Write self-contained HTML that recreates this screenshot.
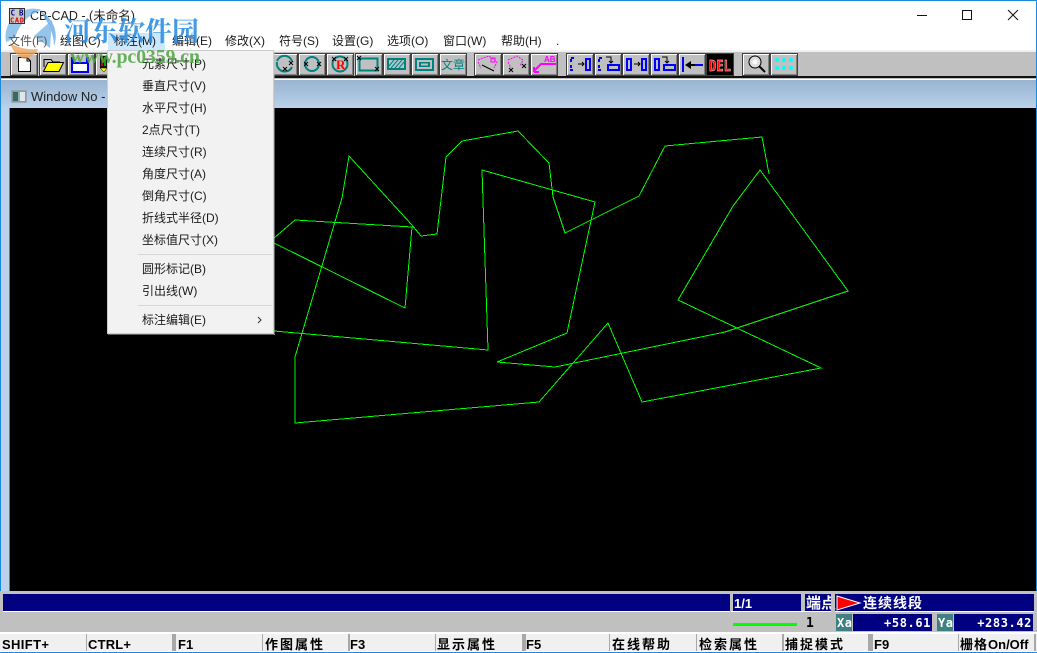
<!DOCTYPE html>
<html lang="zh"><head><meta charset="utf-8"><title>CB-CAD</title>
<style>
html,body{margin:0;padding:0;background:#fff;width:1037px;height:653px;overflow:hidden}
svg{display:block;position:absolute;left:0;top:0}
.m{font:12px "Liberation Sans","Noto Sans CJK SC",sans-serif;fill:#1a1a1a}
.s{font:bold 13px "Liberation Sans","WenQuanYi Zen Hei",sans-serif;fill:#000}
.c{font:bold 13px "WenQuanYi Zen Hei","Noto Sans CJK SC",sans-serif;fill:#000;letter-spacing:2px}
.w{font:bold 12px "DejaVu Sans Mono",monospace;fill:#fff}
</style></head><body>
<svg width="1037" height="653" viewBox="0 0 1037 653" xmlns="http://www.w3.org/2000/svg">
<defs>
<linearGradient id="g" x1="0" y1="0" x2="0" y2="1"><stop offset="0" stop-color="#99b4d1"/><stop offset="1" stop-color="#b9d1ea"/></linearGradient>
<g id="b"><rect x="0" y="0" width="28" height="23" fill="#404040"/><rect x="1" y="1" width="26" height="21" fill="#fff"/><rect x="2" y="2" width="25" height="20" fill="#808080"/><rect x="2" y="2" width="24" height="19" fill="#c0c0c0"/></g>
<g id="x"><path d="M-2 -2L2 2M2 -2L-2 2" stroke="#000" stroke-width="1" fill="none"/></g>
</defs>

<rect width="1037" height="653" fill="#fff"/>
<rect x="0" y="50" width="1037" height="2" fill="#f0f0f0"/>
<rect x="0" y="52" width="1037" height="24" fill="#c0c0c0"/>
<rect x="0" y="76" width="1037" height="2" fill="#111"/>
<rect x="0" y="78" width="1037" height="1" fill="#c0c0c0"/>
<rect x="0" y="79" width="1037" height="1" fill="#fff"/>
<rect x="0" y="80" width="1037" height="28" fill="url(#g)"/>
<rect x="0" y="108" width="10" height="483" fill="#b9d1ea"/>
<rect x="9" y="108" width="1" height="483" fill="#807f30"/>
<rect x="10" y="108" width="1027" height="483" fill="#000"/>

<!-- window border -->
<rect x="0" y="0" width="1037" height="1" fill="#1a8ae0"/>
<rect x="0" y="0" width="1" height="653" fill="#1a8ae0"/>
<rect x="1036" y="0" width="1" height="653" fill="#1a8ae0"/>

<text x="30" y="20" style="font:12.500px 'Liberation Sans','Noto Sans CJK SC',sans-serif;fill:#222">CB-CAD - (未命名)</text>

<!-- window controls -->
<rect x="917" y="15" width="10" height="1" fill="#111"/>
<rect x="962.500" y="10.500" width="9" height="9" fill="none" stroke="#111" stroke-width="1"/>
<path d="M1008 10L1018 20M1018 10L1008 20" stroke="#111" stroke-width="1" fill="none"/>

<!-- menu bar -->
<rect x="108" y="33" width="57" height="17" fill="#cce8ff"/>
<text class="m" x="60" y="45">绘图(C)</text><text class="m" x="114" y="45">标注(M)</text><text class="m" x="172" y="45">编辑(E)</text><text class="m" x="225" y="45">修改(X)</text><text class="m" x="279" y="45">符号(S)</text><text class="m" x="332" y="45">设置(G)</text><text class="m" x="387" y="45">选项(O)</text><text class="m" x="443" y="45">窗口(W)</text><text class="m" x="501" y="45">帮助(H)</text><text class="m" x="556" y="45">.</text>

<!-- toolbar buttons -->
<use href="#b" x="10" y="53"/><use href="#b" x="39" y="53"/><use href="#b" x="67" y="53"/><use href="#b" x="95" y="53"/>
<use href="#b" x="270" y="53"/><use href="#b" x="298" y="53"/><use href="#b" x="326" y="53"/><use href="#b" x="355" y="53"/><use href="#b" x="383" y="53"/><use href="#b" x="411" y="53"/><use href="#b" x="439" y="53"/>
<use href="#b" x="474" y="53"/><use href="#b" x="502" y="53"/><use href="#b" x="530" y="53"/>
<use href="#b" x="566" y="53"/><use href="#b" x="594" y="53"/><use href="#b" x="622" y="53"/><use href="#b" x="650" y="53"/><use href="#b" x="678" y="53"/><use href="#b" x="706" y="53"/>
<use href="#b" x="742" y="53"/><use href="#b" x="770" y="53"/>

<!-- new -->
<path d="M18.500 57.500H27L30.500 61V71.500H18.500Z" fill="#fff" stroke="#000"/><path d="M27 57.500V61H30.500" fill="none" stroke="#000"/>
<!-- open -->
<path d="M43.500 71.500L48 62.500H63.500L59 71.500Z" fill="#ff0" stroke="#000"/><path d="M44 67V59.500H51L53 62H60" fill="none" stroke="#000"/>
<!-- save -->
<rect x="71" y="57" width="18" height="16" fill="#00f"/><rect x="74" y="57" width="12" height="5" fill="#c0c0c0"/><rect x="73" y="64" width="14" height="7" fill="#fff"/>
<!-- pencil -->
<rect x="100" y="56" width="7" height="12" fill="#111"/><rect x="101" y="57" width="2" height="9" fill="#c00"/><rect x="104" y="57" width="2" height="9" fill="#0a0"/><path d="M100 68H107L104 72Z" fill="#ff0" stroke="#000" stroke-width=".5"/>

<!-- teal arcs -->
<path d="M277 61A8 8 0 0 1 292 61M292 67A8 8 0 0 1 279 69A8 8 0 0 1 277 62" fill="none" stroke="#008080" stroke-width="2"/>
<use href="#x" x="291" y="63"/><use href="#x" x="285" y="69"/>
<circle cx="312" cy="64" r="7" fill="none" stroke="#008080" stroke-width="2"/><use href="#x" x="306" y="64"/><use href="#x" x="319" y="64"/>
<circle cx="340" cy="64" r="7.500" fill="none" stroke="#008080" stroke-width="2"/><use href="#x" x="334" y="59"/><use href="#x" x="346" y="59"/>
<text x="336" y="69" font-family="Liberation Serif,serif" font-weight="bold" font-size="13" fill="#f00">R</text>
<rect x="359.500" y="58.500" width="18" height="12" fill="none" stroke="#008080" stroke-width="2"/><use href="#x" x="359" y="58"/><use href="#x" x="377" y="69"/>
<rect x="387" y="58" width="19" height="12" fill="#008080"/><rect x="389" y="60" width="15" height="8" fill="#b0c8c8"/>
<path d="M389 66L394 60M391 68L398 60M395 68L402 60M399 68L404 62" stroke="#008080" fill="none"/>
<rect x="415" y="58" width="19" height="13" fill="#008080"/><rect x="417" y="60" width="15" height="9" fill="#c0c0c0"/><rect x="419" y="62" width="11" height="5" fill="#008080"/><rect x="421" y="63.500" width="7" height="2" fill="#c0c0c0"/>
<text x="441" y="69" font-family="Noto Sans CJK SC,sans-serif" font-size="12" fill="#008080">文章</text>

<!-- magenta -->
<path d="M478 60L489 56L497 62L494 68M478 62L481 68" fill="none" stroke="#f0f" stroke-dasharray="2 1"/><path d="M482 65L494 71" stroke="#000" fill="none"/><rect x="491" y="58" width="4" height="4" fill="none" stroke="#f0f"/>
<path d="M508 60L517 56L523 60L520 66M508 62L511 68" fill="none" stroke="#f0f" stroke-dasharray="2 1"/><use href="#x" x="511" y="70"/><use href="#x" x="524" y="66"/>
<path d="M534 71L541 64H556" fill="none" stroke="#f0f" stroke-width="2"/><path d="M534 72V67M534 72H539" fill="none" stroke="#f0f" stroke-width="2"/>
<text x="544" y="62" font-family="Liberation Sans,sans-serif" font-weight="bold" font-size="8" fill="#f0f">AB</text>

<!-- blue move/copy -->
<g fill="none" stroke="#00f" stroke-width="2">
<path d="M574 58H571V62M571 65V70H574" stroke-dasharray="3 1"/><rect x="586" y="59" width="4" height="11"/>
<path d="M602 58H599V62M599 65V70H602" stroke-dasharray="3 1"/><rect x="608" y="65" width="11" height="5"/>
<rect x="627" y="59" width="4" height="11"/><rect x="642" y="59" width="4" height="11"/>
<rect x="655" y="59" width="4" height="11"/><rect x="664" y="65" width="11" height="5"/>
</g>
<path d="M578 64H584M582 62L584 64L582 66" stroke="#000" fill="none"/>
<path d="M606 57H611V63M609 61L611 63L613 61" stroke="#000" fill="none"/>
<path d="M634 64H640M638 62L640 64L638 66" stroke="#000" fill="none"/>
<path d="M662 57H667V63M665 61L667 63L669 61" stroke="#000" fill="none"/>
<rect x="682" y="57" width="2" height="15" fill="#00f"/><rect x="695" y="64" width="8" height="2" fill="#00f"/>
<path d="M685 65L691 61V64H695V66H691V69Z" fill="#000"/>
<rect x="707" y="54" width="26" height="21" fill="#000"/>
<text x="709" y="71" font-family="DejaVu Sans Mono,monospace" font-weight="bold" font-size="15" fill="#f00" stroke="#fff" stroke-width=".4" textLength="22" lengthAdjust="spacingAndGlyphs">DEL</text>

<!-- magnifier -->
<circle cx="755" cy="62" r="6" fill="#ddd" stroke="#000"/><circle cx="755" cy="62" r="2.500" fill="#fff"/><path d="M759 66L765 72" stroke="#000" stroke-width="2"/>
<g fill="#0ff"><circle cx="777" cy="60" r="2"/><circle cx="784" cy="60" r="2"/><circle cx="791" cy="60" r="2"/><circle cx="777" cy="68" r="2"/><circle cx="784" cy="68" r="2"/><circle cx="791" cy="68" r="2"/></g>

<!-- child title -->
<rect x="12" y="91" width="14" height="11" fill="#9ab" stroke="#888"/><rect x="13" y="92" width="5" height="9" fill="#2f6f5f"/><rect x="20" y="92" width="5" height="9" fill="#dfe8e8"/>
<text x="31" y="101" style="font:13px 'Liberation Sans',sans-serif;fill:#222">Window No -</text>

<!-- drawing -->
<g fill="none" stroke="#00ff00" stroke-width="1" shape-rendering="crispEdges">
<polyline points="274,238 295,220 412,227 405,308 274,243"/>
<polyline points="274,331 488,350 482,170 595,202 567,333 497,362 555,367 725,332 848,291 760,170 733,206 678,300 821,368 642,402 608,323 539,402 295,423 295,357 342,198 349,156 411,224 421,236 437,234 446,157 462,141 518,131 549,163 553,197 565,233 639,196 665,146 762,137 769,174"/>
</g>

<!-- popup menu -->
<rect x="107.500" y="50.500" width="166" height="283" fill="#f2f2f2" stroke="#ccc"/>
<rect x="274" y="52" width="1" height="283" fill="#bbb" opacity=".5"/>
<rect x="108" y="334" width="167" height="1" fill="#bbb" opacity=".5"/>
<text class="m" x="142" y="68">元素尺寸(P)</text>
<text class="m" x="142" y="90">垂直尺寸(V)</text>
<text class="m" x="142" y="112">水平尺寸(H)</text>
<text class="m" x="142" y="134">2点尺寸(T)</text>
<text class="m" x="142" y="156">连续尺寸(R)</text>
<text class="m" x="142" y="178">角度尺寸(A)</text>
<text class="m" x="142" y="200">倒角尺寸(C)</text>
<text class="m" x="142" y="222">折线式半径(D)</text>
<text class="m" x="142" y="244">坐标值尺寸(X)</text>
<rect x="138" y="254" width="134" height="1" fill="#d7d7d7"/>
<text class="m" x="142" y="273">圆形标记(B)</text>
<text class="m" x="142" y="295">引出线(W)</text>
<rect x="138" y="305" width="134" height="1" fill="#d7d7d7"/>
<text class="m" x="142" y="324">标注编辑(E)</text>
<path d="M258 317L261 320L258 323" fill="none" stroke="#333"/>

<!-- status -->
<rect x="0" y="591" width="1037" height="62" fill="#c0c0c0"/>
<rect x="3" y="594" width="727" height="17" fill="#000080"/>
<rect x="3" y="611" width="727" height="1" fill="#fff"/>
<rect x="733" y="594" width="68" height="17" fill="#000080"/>
<rect x="805" y="594" width="26" height="17" fill="#000080"/>
<rect x="835" y="594" width="199" height="17" fill="#000080"/>
<rect x="731" y="611" width="303" height="1" fill="#fff"/>
<text x="734" y="608" style="font:bold 13px 'Liberation Sans',sans-serif;fill:#fff">1/1</text>
<text x="806" y="608" style="font:bold 15px 'WenQuanYi Zen Hei','Noto Sans CJK SC',sans-serif;fill:#fff">端点</text>
<rect x="831" y="594" width="4" height="18" fill="#c0c0c0"/>
<path d="M837 596L860 603L837 610Z" fill="#f00" stroke="#fff" stroke-width="1"/>
<text x="863" y="608" style="font:bold 14px 'WenQuanYi Zen Hei','Noto Sans CJK SC',sans-serif;fill:#fff;letter-spacing:1px">连续线段</text>
<rect x="733" y="623" width="64" height="3" fill="#00ff00"/>
<text x="806" y="627" style="font:bold 13px 'DejaVu Sans Mono',monospace;fill:#000">1</text>
<rect x="836" y="614" width="16" height="17" fill="#408080"/>
<rect x="853" y="614" width="79" height="17" fill="#000080"/>
<rect x="937" y="614" width="16" height="17" fill="#408080"/>
<rect x="954" y="614" width="79" height="17" fill="#000080"/>
<text class="w" x="837" y="627" textLength="15">Xa</text>
<text class="w" x="938" y="627" textLength="15">Ya</text>
<text class="w" x="931" y="627" text-anchor="end" letter-spacing=".6">+58.61</text>
<text class="w" x="1032" y="627" text-anchor="end" letter-spacing=".6">+283.42</text>

<rect x="0" y="632" width="1037" height="21" fill="#f0f0f0"/>
<rect x="0" y="632" width="1037" height="2" fill="#fff"/>
<g fill="#a8a8a8">
<rect x="86" y="634" width="1" height="17"/><rect x="172" y="634" width="4" height="17"/><rect x="262" y="634" width="1" height="17"/><rect x="348" y="634" width="2" height="17"/><rect x="435" y="634" width="1" height="17"/><rect x="522" y="634" width="4" height="17"/><rect x="609" y="634" width="1" height="17"/><rect x="696" y="634" width="1" height="17"/><rect x="782" y="634" width="2" height="17"/><rect x="868" y="634" width="5" height="17"/><rect x="958" y="634" width="1" height="17"/><rect x="1034" y="634" width="2" height="17"/>
</g>
<rect x="0" y="651" width="1037" height="1" fill="#fff"/>
<rect x="0" y="652" width="1037" height="1" fill="#1a8ae0"/>
<text class="s" x="2" y="649" textLength="47">SHIFT+</text>
<text class="s" x="88" y="649" textLength="43">CTRL+</text>
<text class="s" x="178" y="649">F1</text>
<text class="c" x="265" y="649">作图属性</text>
<text class="s" x="350" y="649">F3</text>
<text class="c" x="437" y="649">显示属性</text>
<text class="s" x="526" y="649">F5</text>
<text class="c" x="612" y="649">在线帮助</text>
<text class="c" x="699" y="649">检索属性</text>
<text class="c" x="785" y="649">捕捉模式</text>
<text class="s" x="874" y="649">F9</text>
<text class="c" x="960" y="649" style="letter-spacing:1px">栅格<tspan font-family="Liberation Sans,sans-serif" font-size="13" letter-spacing="0">On/Off</tspan></text>

<!-- watermark -->
<g opacity=".75">
<path d="M6 42A28 28 0 0 1 42 10C30 14 20 22 15 38Z" fill="#6fb2e8"/>
<path d="M40 11A28 28 0 0 1 54 46C54 36 50 24 40 11Z" fill="#5ea8e6"/>
<path d="M34 36L52 20L50 48Z" fill="#5aa5e2" opacity=".85"/>
<path d="M10 43C18 48 28 50 38 49C36 54 30 58 24 59C17 56 12 50 10 43Z" fill="#f2a050"/>
</g>
<text class="m" x="8" y="45" style="fill:#555">文件(F)</text>
<text x="64" y="41" style="font:bold 27px 'Noto Serif CJK SC','Noto Sans CJK SC',serif;fill:#2f8fe0;opacity:.9">河东软件园</text>
<text x="70" y="63" style="font:bold 20px 'Liberation Serif',serif;fill:#4fa544;opacity:.85" textLength="130">www.pc0359.cn</text>

<!-- app icon above watermark -->
<rect x="9.500" y="8.500" width="15" height="15" fill="#c8c8c8" stroke="#333" stroke-width="1"/>
<text x="10.500" y="15.500" font-family="DejaVu Sans Mono,monospace" font-weight="bold" font-size="7.500" fill="#00008b" textLength="13">CB</text>
<text x="10" y="22.500" font-family="DejaVu Sans Mono,monospace" font-weight="bold" font-size="7" fill="#e00000" textLength="14">CAD</text>
</svg>
</body></html>
